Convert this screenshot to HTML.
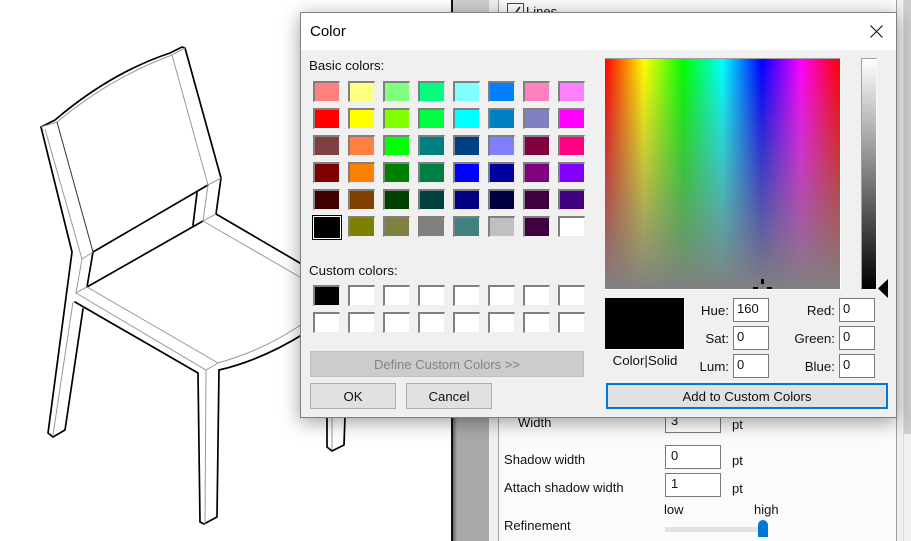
<!DOCTYPE html>
<html><head><meta charset="utf-8"><style>
html,body{margin:0;padding:0;width:911px;height:541px;overflow:hidden;background:#fff;font-family:"Liberation Sans",sans-serif;font-size:13.3px;color:#000}
.a{position:absolute}
.t{position:absolute;white-space:nowrap;line-height:18px;color:#111}
.p{font-size:13px;letter-spacing:.02px}
.in{position:absolute;box-sizing:border-box;background:#fff;border:1px solid #7a7a7a;line-height:20px;padding-left:3px;color:#111;font-size:13px}
.s{position:absolute;box-sizing:border-box;width:27px;height:21px;border:1px solid #f8f8f8;border-top:2px solid #808080;border-left:2px solid #808080;border-right-color:#eee;border-bottom-color:#eee}
.b{position:absolute;box-sizing:border-box;text-align:center;background:#e1e1e1;border:1px solid #adadad;line-height:26px;color:#111;height:26px;font-size:13.2px}
</style></head><body>
<svg class="a" style="left:0;top:0" width="452" height="541" viewBox="0 0 452 541" fill="none">
<g stroke="#000" stroke-width="1.7" stroke-linejoin="round" stroke-linecap="round">
<path d="M41 127L55 120Q110 73 170 53L182 47L185 48L221 178L216 214L305 266"/>
<path d="M41 127L72 252L48 433L53 437L65 430L83 309"/>
<path d="M75 302L198 373L200 522L204 524L217 517L219 370Q262 360 305 333"/>
<path d="M93 252L208 185M93 252L87 287L203 221M197 193L193 225"/>
<path d="M327 416L327 447L332 451L344 445L345 416"/>
</g>
<g stroke="#999" stroke-width="1">
<path d="M41 127L57 122Q110 78 172 55L185 48M172 55L208 185L221 178M45 129L82 259L93 252M208 185L203 221L216 214"/>
<path d="M82 259L76 293L87 287L218 363L206 370L76 293M206 370L205 524M218 363Q265 350 305 322M203 221L305 280M73 302L53 435M332 416L332 450"/>
</g>
<path d="M57 122L93 252" stroke="#333" stroke-width="1" />
</svg>
<div class="a" style="left:451px;top:0;width:2px;height:541px;background:#111"></div>
<div class="a" style="left:453px;top:0;width:36px;height:541px;background:linear-gradient(to right,#666,#a9a9a9 4px)"></div>
<div class="a" style="left:453px;top:0;width:36px;height:12px;background:#cfcfcf"></div>
<div class="a" style="left:489px;top:0;width:422px;height:541px;background:#f0f0f0"></div>
<div class="a" style="left:498px;top:0;width:399px;height:541px;box-sizing:border-box;background:#fbfbfb;border:1px solid #a0a0a0;border-width:0 1px"></div>
<div class="a" style="left:903px;top:0;width:1px;height:541px;background:#dcdcdc"></div>
<div class="a" style="left:904px;top:0;width:7px;height:434px;background:#cdcdcd"></div>
<div class="a" style="left:507px;top:3px;width:15px;height:15px;border:1px solid #444;background:#fff"></div>
<svg class="a" style="left:507px;top:3px" width="17" height="12"><path d="M4 10L7 12L13 4" stroke="#222" stroke-width="1.5" fill="none"/></svg>
<div class="t p" style="left:526px;top:3px">Lines</div>

<div class="t p" style="left:518px;top:414px">Width</div>
<div class="in" style="left:665px;top:409px;width:56px;height:24px;padding-left:5px;line-height:22px">3</div>
<div class="t p" style="left:732px;top:416px">pt</div>
<div class="t p" style="left:504px;top:451px">Shadow width</div>
<div class="in" style="left:665px;top:445px;width:56px;height:24px;padding-left:5px">0</div>
<div class="t p" style="left:732px;top:452px">pt</div>
<div class="t p" style="left:504px;top:479px">Attach shadow width</div>
<div class="in" style="left:665px;top:473px;width:56px;height:24px;padding-left:5px">1</div>
<div class="t p" style="left:732px;top:480px">pt</div>
<div class="t p" style="left:664px;top:501px">low</div>
<div class="t p" style="left:754px;top:501px">high</div>
<div class="t p" style="left:504px;top:517px">Refinement</div>
<div class="a" style="left:665px;top:527px;width:96px;height:5px;background:#e1e4e4"></div>
<div class="a" style="left:758px;top:520px;width:10px;height:17px;background:#0078d7;border-radius:5px 5px 0 0"></div>

<div class="a" style="left:300px;top:12px;width:597px;height:406px;box-sizing:border-box;background:#f0f0f0;border:1px solid #7f7f7f;box-shadow:0 4px 18px rgba(0,0,0,.38)"></div>
<div class="a" style="left:301px;top:13px;width:595px;height:37px;background:#fff"></div>
<div class="t" style="left:310px;top:23px;font-size:15px;color:#000">Color</div>
<svg class="a" style="left:869px;top:24px" width="15" height="15"><path d="M1.5 1.5L13.5 13.5M13.5 1.5L1.5 13.5" stroke="#111" stroke-width="1.1"/></svg>
<div class="t" style="left:309px;top:57px">Basic colors:</div>

<!-- row 1 -->
<div class="s" style="left:313px;top:81px;background:#ff8080"></div><div class="s" style="left:348px;top:81px;background:#ffff80"></div><div class="s" style="left:383px;top:81px;background:#80ff80"></div><div class="s" style="left:418px;top:81px;background:#00ff80"></div><div class="s" style="left:453px;top:81px;background:#80ffff"></div><div class="s" style="left:488px;top:81px;background:#0080ff"></div><div class="s" style="left:523px;top:81px;background:#ff80c0"></div><div class="s" style="left:558px;top:81px;background:#ff80ff"></div>
<!-- row 2 -->
<div class="s" style="left:313px;top:108px;background:#ff0000"></div><div class="s" style="left:348px;top:108px;background:#ffff00"></div><div class="s" style="left:383px;top:108px;background:#80ff00"></div><div class="s" style="left:418px;top:108px;background:#00ff40"></div><div class="s" style="left:453px;top:108px;background:#00ffff"></div><div class="s" style="left:488px;top:108px;background:#0080c0"></div><div class="s" style="left:523px;top:108px;background:#8080c0"></div><div class="s" style="left:558px;top:108px;background:#ff00ff"></div>
<!-- row 3 -->
<div class="s" style="left:313px;top:135px;background:#804040"></div><div class="s" style="left:348px;top:135px;background:#ff8040"></div><div class="s" style="left:383px;top:135px;background:#00ff00"></div><div class="s" style="left:418px;top:135px;background:#008080"></div><div class="s" style="left:453px;top:135px;background:#004080"></div><div class="s" style="left:488px;top:135px;background:#8080ff"></div><div class="s" style="left:523px;top:135px;background:#800040"></div><div class="s" style="left:558px;top:135px;background:#ff0080"></div>
<!-- row 4 -->
<div class="s" style="left:313px;top:162px;background:#800000"></div><div class="s" style="left:348px;top:162px;background:#ff8000"></div><div class="s" style="left:383px;top:162px;background:#008000"></div><div class="s" style="left:418px;top:162px;background:#008040"></div><div class="s" style="left:453px;top:162px;background:#0000ff"></div><div class="s" style="left:488px;top:162px;background:#0000a0"></div><div class="s" style="left:523px;top:162px;background:#800080"></div><div class="s" style="left:558px;top:162px;background:#8000ff"></div>
<!-- row 5 -->
<div class="s" style="left:313px;top:189px;background:#400000"></div><div class="s" style="left:348px;top:189px;background:#804000"></div><div class="s" style="left:383px;top:189px;background:#004000"></div><div class="s" style="left:418px;top:189px;background:#004040"></div><div class="s" style="left:453px;top:189px;background:#000080"></div><div class="s" style="left:488px;top:189px;background:#000040"></div><div class="s" style="left:523px;top:189px;background:#400040"></div><div class="s" style="left:558px;top:189px;background:#400080"></div>
<!-- row 6 -->
<div class="a" style="left:312px;top:215px;width:28px;height:23px;border:1px solid #000;background:#fff"></div>
<div class="a" style="left:314px;top:217px;width:26px;height:21px;background:#000"></div>
<div class="s" style="left:348px;top:216px;background:#808000"></div><div class="s" style="left:383px;top:216px;background:#808040"></div><div class="s" style="left:418px;top:216px;background:#808080"></div><div class="s" style="left:453px;top:216px;background:#408080"></div><div class="s" style="left:488px;top:216px;background:#c0c0c0"></div><div class="s" style="left:523px;top:216px;background:#400040"></div><div class="s" style="left:558px;top:216px;background:#fff"></div>

<div class="t" style="left:309px;top:262px">Custom colors:</div>
<div class="s" style="left:313px;top:285px;background:#000"></div><div class="s" style="left:348px;top:285px;background:#fff"></div><div class="s" style="left:383px;top:285px;background:#fff"></div><div class="s" style="left:418px;top:285px;background:#fff"></div><div class="s" style="left:453px;top:285px;background:#fff"></div><div class="s" style="left:488px;top:285px;background:#fff"></div><div class="s" style="left:523px;top:285px;background:#fff"></div><div class="s" style="left:558px;top:285px;background:#fff"></div>
<div class="s" style="left:313px;top:312px;background:#fff"></div><div class="s" style="left:348px;top:312px;background:#fff"></div><div class="s" style="left:383px;top:312px;background:#fff"></div><div class="s" style="left:418px;top:312px;background:#fff"></div><div class="s" style="left:453px;top:312px;background:#fff"></div><div class="s" style="left:488px;top:312px;background:#fff"></div><div class="s" style="left:523px;top:312px;background:#fff"></div><div class="s" style="left:558px;top:312px;background:#fff"></div>

<div class="b" style="left:310px;top:351px;width:274px;background:#cccccc;border-color:#bfbfbf;color:#838383;font-size:13px">Define Custom Colors &gt;&gt;</div>
<div class="b" style="left:310px;top:383px;width:86px">OK</div>
<div class="b" style="left:406px;top:383px;width:86px">Cancel</div>

<div class="a" style="left:605px;top:58px;width:236px;height:232px;box-sizing:border-box;background:linear-gradient(to bottom,rgba(128,128,128,0),#808080),linear-gradient(to right,#f00 0%,#ff0 16.67%,#0f0 33.33%,#0ff 50%,#00f 66.67%,#f0f 83.33%,#f00 100%);border-top:1px solid #a0a0a0;border-right:1px solid #fff;border-bottom:1px solid #fff"></div>
<div class="a" style="left:761px;top:279px;width:3px;height:5px;background:#000"></div>
<div class="a" style="left:753px;top:287px;width:5px;height:2px;background:#000"></div>
<div class="a" style="left:767px;top:287px;width:5px;height:2px;background:#000"></div>

<div class="a" style="left:861px;top:58px;width:16px;height:232px;box-sizing:border-box;background:linear-gradient(to bottom,#fff,#000);border:1px solid #f8f8f8;border-top-color:#a0a0a0;border-left-color:#a0a0a0"></div>
<svg class="a" style="left:877px;top:279px" width="12" height="20"><path d="M1 9.5L11 0V19Z" fill="#000"/></svg>

<div class="a" style="left:605px;top:298px;width:79px;height:51px;background:#000;border-right:1px solid #fff;border-bottom:1px solid #fff"></div>
<div class="t" style="left:605px;top:352px;width:80px;text-align:center">Color|Solid</div>

<div class="t" style="left:665px;top:302px;width:64px;text-align:right">Hue:</div>
<div class="t" style="left:665px;top:330px;width:64px;text-align:right">Sat:</div>
<div class="t" style="left:665px;top:358px;width:64px;text-align:right">Lum:</div>
<div class="in" style="left:733px;top:298px;width:36px;height:24px">160</div>
<div class="in" style="left:733px;top:326px;width:36px;height:24px">0</div>
<div class="in" style="left:733px;top:354px;width:36px;height:24px">0</div>
<div class="t" style="left:775px;top:302px;width:60px;text-align:right">Red:</div>
<div class="t" style="left:775px;top:330px;width:60px;text-align:right">Green:</div>
<div class="t" style="left:775px;top:358px;width:60px;text-align:right">Blue:</div>
<div class="in" style="left:839px;top:298px;width:36px;height:24px">0</div>
<div class="in" style="left:839px;top:326px;width:36px;height:24px">0</div>
<div class="in" style="left:839px;top:354px;width:36px;height:24px">0</div>

<div class="b" style="left:606px;top:383px;width:282px;border:2px solid #0078d7;line-height:24px">Add to Custom Colors</div>
</body></html>
